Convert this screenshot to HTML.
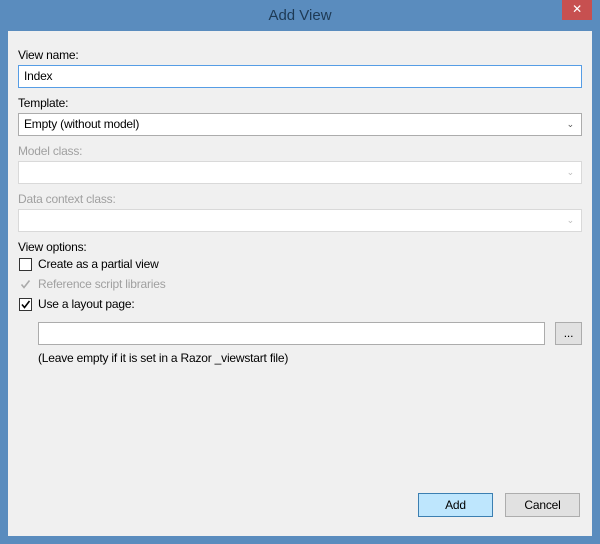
<!DOCTYPE html>
<html><head><style>
body{margin:0;width:600px;height:544px;background:#5a8cbe;position:relative;overflow:hidden;font-family:"Liberation Sans",sans-serif;font-size:12px;letter-spacing:-0.2px;color:#000}
.a{position:absolute}
.title{left:0;width:600px;top:7px;text-align:center;font-size:15px;color:#1e3a55;letter-spacing:0}
.close{left:562px;top:0;width:30px;height:20px;background:#c75050;color:#fff;text-align:center;font-size:12px;line-height:19px}
.content{left:8px;top:31px;width:584px;height:505px;background:#f0f0f0}
.lbl{left:18px}
.gray{color:#a0a0a0}
.box{background:#fff;border:1px solid #acacac;box-sizing:border-box;height:23px;line-height:21px;padding-left:5px}
.dis{border-color:#d9d9d9}
.chev{position:absolute;right:7px;top:0;font-size:9px;color:#555}
.cb{width:13px;height:13px;border:1px solid #333;background:#fff;box-sizing:border-box;left:19px}
.btn{box-sizing:border-box;height:24px;line-height:22px;text-align:center}
</style></head><body>
<div class="a title">Add View</div>
<div class="a close">✕</div>
<div class="a content"></div>
<div class="a lbl" style="top:48px">View name:</div>
<div class="a box" style="left:18px;top:65px;width:564px;border-color:#569de5">Index</div>
<div class="a lbl" style="top:96px">Template:</div>
<div class="a box" style="left:18px;top:113px;width:564px">Empty (without model)<span class="chev">&#8964;</span></div>
<div class="a lbl gray" style="top:144px">Model class:</div>
<div class="a box dis" style="left:18px;top:161px;width:564px"><span class="chev" style="color:#bbb">&#8964;</span></div>
<div class="a lbl gray" style="top:192px">Data context class:</div>
<div class="a box dis" style="left:18px;top:209px;width:564px"><span class="chev" style="color:#bbb">&#8964;</span></div>
<div class="a lbl" style="top:240px">View options:</div>
<div class="a cb" style="top:258px"></div>
<div class="a" style="left:38px;top:257px">Create as a partial view</div>
<svg class="a" style="left:19px;top:278px" width="13" height="13"><path d="M2.5 6.5 L5 9.5 L10.5 2.5" stroke="#aaa" stroke-width="1.6" fill="none"/></svg>
<div class="a gray" style="left:38px;top:277px">Reference script libraries</div>
<div class="a cb" style="top:298px"></div>
<svg class="a" style="left:19px;top:298px" width="13" height="13"><path d="M3 6.5 L5.5 9.5 L10.5 3" stroke="#000" stroke-width="1.6" fill="none"/></svg>
<div class="a" style="left:38px;top:297px">Use a layout page:</div>
<div class="a box" style="left:38px;top:322px;width:507px"></div>
<div class="a btn" style="left:555px;top:322px;width:27px;height:23px;border:1px solid #acacac;background:#e1e1e1;line-height:20px">...</div>
<div class="a" style="left:38px;top:351px">(Leave empty if it is set in a Razor _viewstart file)</div>
<div class="a btn" style="left:418px;top:493px;width:75px;background:#bee6fd;border:1px solid #3c7fb1">Add</div>
<div class="a btn" style="left:505px;top:493px;width:75px;background:#e1e1e1;border:1px solid #adadad">Cancel</div>
</body></html>
